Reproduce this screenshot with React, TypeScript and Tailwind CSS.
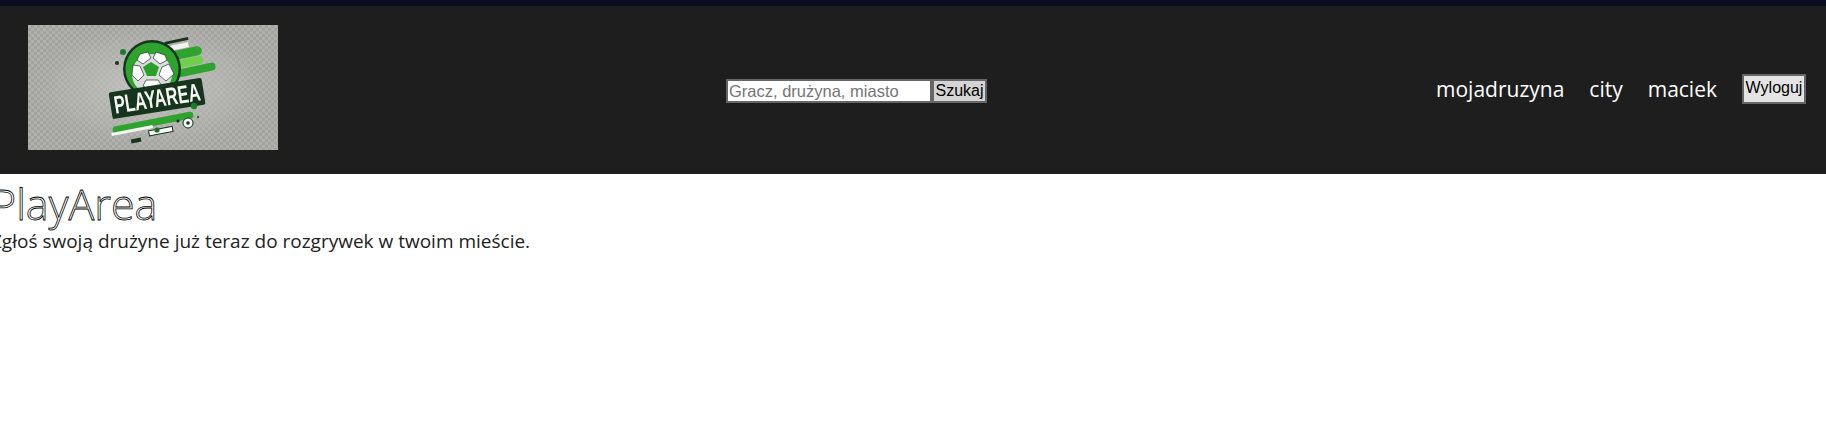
import React from "react";

function Logo() {
  return (
    <svg width="250" height="125" viewBox="0 0 250 125" className="mb-[5px] block shrink-0">
      <defs>
        <pattern id="chk" width="6" height="6" patternUnits="userSpaceOnUse">
          <rect width="6" height="6" fill="#a2a29e" />
          <rect width="3" height="3" fill="#b0b0ac" />
          <rect x="3" y="3" width="3" height="3" fill="#b0b0ac" />
        </pattern>
        <radialGradient id="glow" cx="0.5" cy="0.5" r="0.6">
          <stop offset="0" stopColor="#d0d0cd" stopOpacity="0.75" />
          <stop offset="0.6" stopColor="#c0c0bc" stopOpacity="0.3" />
          <stop offset="1" stopColor="#999" stopOpacity="0" />
        </radialGradient>
        <filter id="soft" x="-5%" y="-5%" width="110%" height="110%">
          <feGaussianBlur stdDeviation="0.4" />
        </filter>
      </defs>
      <rect width="250" height="125" fill="url(#chk)" />
      <rect width="250" height="125" fill="url(#glow)" />
      <g filter="url(#soft)">
        {/* stripes */}
        <g transform="rotate(-12 125 50)">
          <rect x="78" y="60" width="44" height="8" rx="4" fill="#2ea32e" />
          <rect x="80" y="67" width="40" height="4" fill="#e8efe4" />
          <rect x="82" y="70" width="44" height="8" rx="4" fill="#3fb03a" />
          <rect x="143" y="20" width="24" height="3" fill="#14351f" />
          <rect x="140" y="25" width="26" height="5" fill="#f2f2f2" />
          <rect x="140" y="31" width="38" height="9" rx="4.5" fill="#2ea32e" />
          <rect x="145" y="41" width="32" height="8" rx="3" fill="#6fd04a" />
          <rect x="140" y="50" width="48" height="8" rx="4" fill="#2ea32e" />
        </g>
        {/* ball */}
        <circle cx="124" cy="44" r="29" fill="#14351f" />
        <circle cx="124" cy="44" r="26.5" fill="#2ea32e" />
        <circle cx="124" cy="49" r="20" fill="#dcdcdc" />
        <polygon points="123,37 131,42 128,51 119,51 115,42" fill="#2ca02c" />
        <polygon points="112,29 120,27 123,33 115,39 109,35" fill="#fff" stroke="#14351f" strokeWidth="0.7" />
        <polygon points="128,27 137,30 139,35 132,39 125,33" fill="#fff" stroke="#14351f" strokeWidth="0.7" />
        <polygon points="105,40 112,41 116,50 110,56 104,50" fill="#fff" stroke="#14351f" strokeWidth="0.7" />
        <polygon points="134,42 141,39 146,49 138,56 131,50" fill="#fff" stroke="#14351f" strokeWidth="0.7" />
        <polygon points="118,55 130,55 134,61 124,66 115,61" fill="#fff" stroke="#14351f" strokeWidth="0.7" />
        {/* wordmark */}
        <g transform="rotate(-9 129 73)">
          <rect x="82" y="60" width="94" height="27" rx="2" fill="#14351f" />
          <text
            x="129"
            y="82"
            textAnchor="middle"
            fontFamily="'Liberation Sans', sans-serif"
            fontWeight="700"
            fontSize="25"
            fill="#f6f6f2"
            textLength="87"
            lengthAdjust="spacingAndGlyphs"
          >
            PLAYAREA
          </text>
        </g>
        {/* lower swoosh */}
        <g transform="rotate(-11 130 97)">
          <rect x="84" y="93" width="82" height="7" rx="3.5" fill="#2ea32e" />
          <rect x="82" y="99" width="42" height="3" fill="#f5f5f5" />
          <rect x="119" y="104" width="24" height="5" fill="#fff" stroke="#14351f" />
          <rect x="100" y="109" width="10" height="4" fill="#14351f" />
        </g>
        <circle cx="95" cy="27" r="3" fill="#1e7a2c" />
        <circle cx="89" cy="38" r="2" fill="#14351f" />
        <circle cx="166" cy="81" r="3.2" fill="#1e7a2c" />
        <circle cx="129" cy="105" r="2.6" fill="#1e6a2c" />
        <circle cx="160" cy="98" r="5" fill="#f5f5f5" stroke="#14351f" />
        <circle cx="160" cy="98" r="1.8" fill="#14351f" />
        <circle cx="150" cy="96" r="1.6" fill="#14351f" />
        <circle cx="170" cy="92" r="1.2" fill="#1e7a2c" />
        <circle cx="169" cy="23" r="1.2" fill="#3aa83a" />
      </g>
    </svg>
  );
}

export default function App() {
  return (
    <div className="min-h-[422px] bg-white font-['Open_Sans',sans-serif]">
      <div className="h-[6px] bg-[#0a0c22]" />
      <header className="flex h-[168px] items-center bg-[#1e1e1e] pl-[28px] pr-[20px]">
        <Logo />
        <form className="ml-[448px] mt-[2px] flex h-[24px] items-stretch font-['Liberation_Sans',sans-serif]">
          <input
            placeholder="Gracz, drużyna, miasto"
            className="w-[206px] border-2 border-[#666] bg-white px-[1px] text-[16.5px] text-black placeholder:text-[#757575] focus:outline-none"
          />
          <button type="button" className="w-[55px] border-2 border-[#666] bg-[#d4d4d4] text-[16px] leading-none text-black">
            Szukaj
          </button>
        </form>
        <nav className="ml-auto flex items-center gap-[25px] text-[21px] text-white">
          <a>mojadruzyna</a>
          <a>city</a>
          <a>maciek</a>
          <button type="button" className="mb-[3px] h-[30px] w-[64px] border-2 border-[#666] bg-[#e4e4e4] pb-[3px] font-['Liberation_Sans',sans-serif] text-[16px] text-black">
            Wyloguj
          </button>
        </nav>
      </header>
      <main className="ml-[-9px]">
        <h1 className="pt-[8px] text-[43px] leading-[44px] font-light text-white [-webkit-text-stroke:0.8px_#000]">PlayArea</h1>
        <p className="pt-[1px] text-[19px] leading-[28px] text-[#222]">Zgłoś swoją drużyne już teraz do rozgrywek w twoim mieście.</p>
      </main>
    </div>
  );
}
